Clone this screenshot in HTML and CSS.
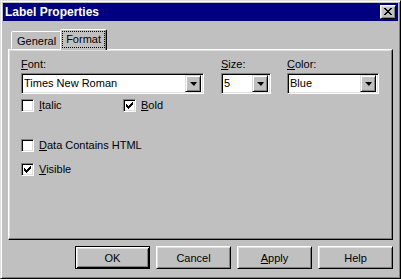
FILE: index.html
```html
<!DOCTYPE html>
<html lang="en">
  <head>
    <meta charset="UTF-8" />
    <title>Label Properties</title>
    <link rel="stylesheet" href="styles.css">
  </head>
  <body>
    <div class="window">
      <div class="titlebar">
        <span class="title">Label Properties</span>
        <button class="close-btn">
          <svg width="8" height="7" viewBox="0 0 8 7" shape-rendering="crispEdges">
            <rect x="0" y="0" width="2" height="1"/><rect x="6" y="0" width="2" height="1"/>
            <rect x="1" y="1" width="2" height="1"/><rect x="5" y="1" width="2" height="1"/>
            <rect x="2" y="2" width="4" height="1"/>
            <rect x="3" y="3" width="2" height="1"/>
            <rect x="2" y="4" width="4" height="1"/>
            <rect x="1" y="5" width="2" height="1"/><rect x="5" y="5" width="2" height="1"/>
            <rect x="0" y="6" width="2" height="1"/><rect x="6" y="6" width="2" height="1"/>
          </svg>
        </button>
      </div>

      <div class="dialog-body">
        <div class="tabs">
          <div class="tab">General</div>
          <div class="tab active"><span class="focus">Format</span></div>
        </div>

        <div class="tab-panel">
          <div class="field-row">
            <div class="field font-field">
              <label><u>F</u>ont:</label>
              <div class="combo">
                <span class="combo-text">Times New Roman</span>
                <span class="drop-btn"><span class="arrow"></span></span>
              </div>
            </div>
            <div class="field size-field">
              <label><u>S</u>ize:</label>
              <div class="combo">
                <span class="combo-text">5</span>
                <span class="drop-btn"><span class="arrow"></span></span>
              </div>
            </div>
            <div class="field color-field">
              <label><u>C</u>olor:</label>
              <div class="combo">
                <span class="combo-text">Blue</span>
                <span class="drop-btn"><span class="arrow"></span></span>
              </div>
            </div>
          </div>

          <div class="check-row first-row">
            <div class="check italic-check">
              <span class="box"></span>
              <span class="check-label"><u>I</u>talic</span>
            </div>
            <div class="check">
              <span class="box">
                <svg width="13" height="13" viewBox="0 0 13 13" shape-rendering="crispEdges">
                  <rect x="3" y="5" width="1" height="3"/><rect x="4" y="6" width="1" height="3"/>
                  <rect x="5" y="7" width="1" height="3"/><rect x="6" y="6" width="1" height="3"/>
                  <rect x="7" y="5" width="1" height="3"/><rect x="8" y="4" width="1" height="3"/>
                  <rect x="9" y="3" width="1" height="3"/>
                </svg>
              </span>
              <span class="check-label"><u>B</u>old</span>
            </div>
          </div>

          <div class="check-row html-row">
            <div class="check">
              <span class="box"></span>
              <span class="check-label"><u>D</u>ata Contains HTML</span>
            </div>
          </div>

          <div class="check-row visible-row">
            <div class="check">
              <span class="box">
                <svg width="13" height="13" viewBox="0 0 13 13" shape-rendering="crispEdges">
                  <rect x="3" y="5" width="1" height="3"/><rect x="4" y="6" width="1" height="3"/>
                  <rect x="5" y="7" width="1" height="3"/><rect x="6" y="6" width="1" height="3"/>
                  <rect x="7" y="5" width="1" height="3"/><rect x="8" y="4" width="1" height="3"/>
                  <rect x="9" y="3" width="1" height="3"/>
                </svg>
              </span>
              <span class="check-label"><u>V</u>isible</span>
            </div>
          </div>
        </div>

        <div class="buttons">
          <button class="btn default">OK</button>
          <button class="btn">Cancel</button>
          <button class="btn"><u>A</u>pply</button>
          <button class="btn">Help</button>
        </div>
      </div>
    </div>
  </body>
</html>
```

FILE: styles.css
```css
:root {
  --face: #c0c0c0;
  --light: #dfdfdf;
  --shadow: #808080;
  --dark: #000;
  --title: #000080;
}
* {
  box-sizing: border-box;
  margin: 0;
  padding: 0;
}
body {
  background: var(--face);
  color: #000;
  font-family: 'Liberation Sans', Arial, sans-serif;
  font-size: 11px;
  line-height: 13px;
}
u {
  text-decoration-thickness: 1px;
  text-underline-offset: 1px;
}
.window {
  width: 401px;
  height: 279px;
  padding: 2px;
  border: 1px solid;
  border-color: var(--light) var(--dark) var(--dark) var(--light);
  box-shadow: inset 1px 1px #fff, inset -1px -1px var(--shadow);
}
.titlebar {
  display: flex;
  align-items: center;
  height: 18px;
  padding-left: 2px;
  background: var(--title);
  color: #fff;
}
.title {
  font-weight: bold;
  font-size: 12px;
}
.close-btn {
  display: flex;
  align-items: center;
  justify-content: center;
  width: 16px;
  height: 14px;
  margin-left: auto;
  margin-right: 2px;
  padding: 0 1px 1px 0;
  background: var(--face);
  border: 1px solid;
  border-color: #fff var(--dark) var(--dark) #fff;
  box-shadow: inset 1px 1px var(--light), inset -1px -1px var(--shadow);
}
.dialog-body {
  padding: 0 5px;
}
.tabs {
  display: flex;
  align-items: flex-end;
  height: 20px;
  margin-top: 8px;
  padding-left: 3px;
}
.tab {
  height: 18px;
  padding: 3px 5px 0 5px;
  border: 1px solid;
  border-bottom: none;
  border-color: #fff var(--dark) transparent #fff;
  border-radius: 2px 2px 0 0;
  box-shadow: inset -1px 0 var(--shadow);
  background: var(--face);
}
.tab.active {
  height: 21px;
  margin: 0 -2px -1px -2px;
  padding: 1px 1px 0 1px;
  z-index: 1;
}
.focus {
  display: block;
  height: 17px;
  padding: 1px 3px 0 3px;
  border: 1px dotted #000;
}
.tab-panel {
  height: 191px;
  padding: 8px 12px;
  border: 1px solid;
  border-color: #fff var(--dark) var(--dark) #fff;
  box-shadow: inset -1px -1px var(--shadow), inset 1px 1px var(--light);
}
.field-row {
  display: flex;
}
.field label {
  display: block;
  margin-bottom: 2px;
}
.font-field {
  width: 183px;
}
.size-field {
  width: 50px;
  margin-left: 17px;
}
.color-field {
  width: 92px;
  margin-left: 16px;
}
.combo {
  display: flex;
  align-items: center;
  height: 21px;
  padding: 2px;
  background: #fff;
  border: 1px solid;
  border-color: var(--shadow) #fff #fff var(--shadow);
  box-shadow: inset 1px 1px var(--dark), inset -1px -1px var(--light);
}
.combo-text {
  flex: 1;
  white-space: nowrap;
  overflow: hidden;
}
.drop-btn {
  display: flex;
  align-items: center;
  justify-content: center;
  width: 16px;
  height: 17px;
  background: var(--face);
  border: 1px solid;
  border-color: var(--light) var(--dark) var(--dark) var(--light);
  box-shadow: inset 1px 1px #fff, inset -1px -1px var(--shadow);
}
.arrow {
  width: 0;
  height: 0;
  border-left: 4px solid transparent;
  border-right: 3px solid transparent;
  border-top: 4px solid #000;
}
.check-row {
  display: flex;
  height: 13px;
}
.first-row {
  margin-top: 5px;
}
.html-row {
  margin-top: 27px;
}
.visible-row {
  margin-top: 11px;
}
.check {
  display: flex;
  align-items: center;
}
.italic-check {
  width: 102px;
}
.box {
  display: block;
  width: 13px;
  height: 13px;
  background: #fff;
  border: 1px solid;
  border-color: var(--shadow) #fff #fff var(--shadow);
  box-shadow: inset 1px 1px var(--dark), inset -1px -1px var(--light);
}
.box svg {
  display: block;
  margin: -1px;
}
.check-label {
  margin-left: 5px;
}
.buttons {
  display: flex;
  justify-content: flex-end;
  gap: 6px;
  margin-top: 6px;
}
.btn {
  width: 75px;
  height: 23px;
  font-family: inherit;
  font-size: 11px;
  color: #000;
  background: var(--face);
  border: 1px solid;
  border-color: #fff var(--dark) var(--dark) #fff;
  box-shadow: inset 1px 1px var(--light), inset -1px -1px var(--shadow);
}
.btn.default {
  border-color: var(--dark);
  box-shadow: inset 1px 1px #fff, inset -1px -1px var(--dark), inset 2px 2px var(--light), inset -2px -2px var(--shadow);
}
```
